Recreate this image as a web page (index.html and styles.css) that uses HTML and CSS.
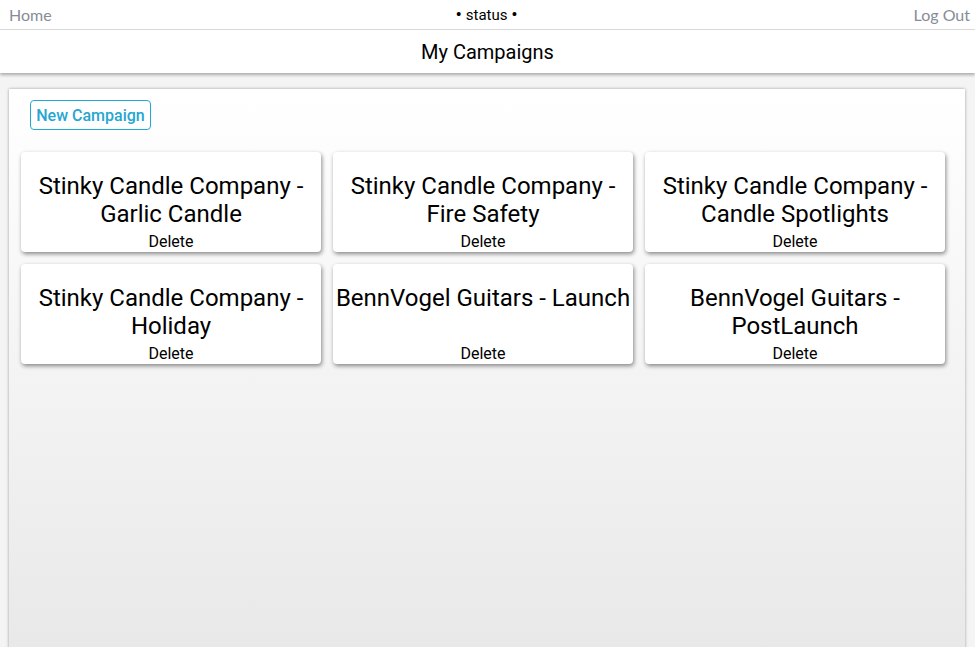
FILE: index.html
```html
<!DOCTYPE html>
<html>
<head>
<meta charset="utf-8">
<link rel="stylesheet" href="styles.css">
</head>
<body>
<div class="topbar">
  <a class="nav-link">Home</a>
  <span class="status"><span class="dot">•</span> status <span class="dot">•</span></span>
  <a class="nav-link">Log Out</a>
</div>
<header class="page-header">My Campaigns</header>
<main class="panel">
  <div class="actions"><button class="new-btn">New Campaign</button></div>
  <div class="grid">
    <div class="card"><div class="card-title">Stinky Candle Company - Garlic Candle</div><div class="card-delete">Delete</div></div>
    <div class="card"><div class="card-title">Stinky Candle Company - Fire Safety</div><div class="card-delete">Delete</div></div>
    <div class="card"><div class="card-title">Stinky Candle Company - Candle Spotlights</div><div class="card-delete">Delete</div></div>
    <div class="card"><div class="card-title">Stinky Candle Company - Holiday</div><div class="card-delete">Delete</div></div>
    <div class="card"><div class="card-title">BennVogel Guitars - Launch</div><div class="card-delete">Delete</div></div>
    <div class="card"><div class="card-title">BennVogel Guitars - PostLaunch</div><div class="card-delete">Delete</div></div>
  </div>
</main>
</body>
</html>
```
FILE: styles.css
```css
html, body {
  margin: 0;
  padding: 0;
  height: 100%;
  overflow: hidden;
}
body {
  background: #f4f4f4;
  font-family: Roboto, "Liberation Sans", sans-serif;
  color: #000;
}
.topbar {
  height: 29px;
  border-bottom: 1px solid #dcdcdc;
  background: #fff;
  display: flex;
  align-items: center;
  justify-content: space-between;
  padding: 0 5px 0 9px;
}
.nav-link {
  font-family: Lato, "Liberation Sans", sans-serif;
  font-size: 16px;
  color: #878c96;
  cursor: pointer;
}
.status {
  font-size: 15px;
  margin-left: 8px;
}
.dot {
  font-size: 19px;
  line-height: 15px;
  vertical-align: -1px;
}
.page-header {
  height: 43px;
  background: #fff;
  display: flex;
  align-items: center;
  justify-content: center;
  font-size: 20px;
  box-shadow: 0 2px 3px rgba(0,0,0,0.3);
  position: relative;
  z-index: 1;
}
.panel {
  margin: 16px 10px 0 9px;
  height: 620px;
  background: linear-gradient(to bottom, #ffffff 0%, #e6e6e6 100%);
  box-shadow: 0 0 3px rgba(0,0,0,0.35);
  padding: 11px 0 0 12px;
  box-sizing: border-box;
}
.actions {
  padding-left: 9px;
  margin-bottom: 22px;
}
.new-btn {
  height: 30px;
  width: 121px;
  border: 1px solid #1faad6;
  border-radius: 4px;
  background: #fff;
  color: #26a6d1;
  font-family: Roboto, "Liberation Sans", sans-serif;
  font-size: 16px;
  font-weight: 500;
  padding: 0;
  cursor: pointer;
}
.grid {
  display: grid;
  grid-template-columns: repeat(3, 300px);
  gap: 12px;
}
.card {
  height: 100px;
  background: #fff;
  border-radius: 4px;
  box-shadow: 1px 2px 4px rgba(0,0,0,0.45);
  display: flex;
  flex-direction: column;
  align-items: center;
  text-align: center;
  padding: 20px 2px 1px;
  box-sizing: border-box;
}
.card-title {
  font-size: 24px;
  line-height: 28px;
}
.card-delete {
  margin-top: auto;
  font-size: 16px;
  line-height: 18px;
}
```
